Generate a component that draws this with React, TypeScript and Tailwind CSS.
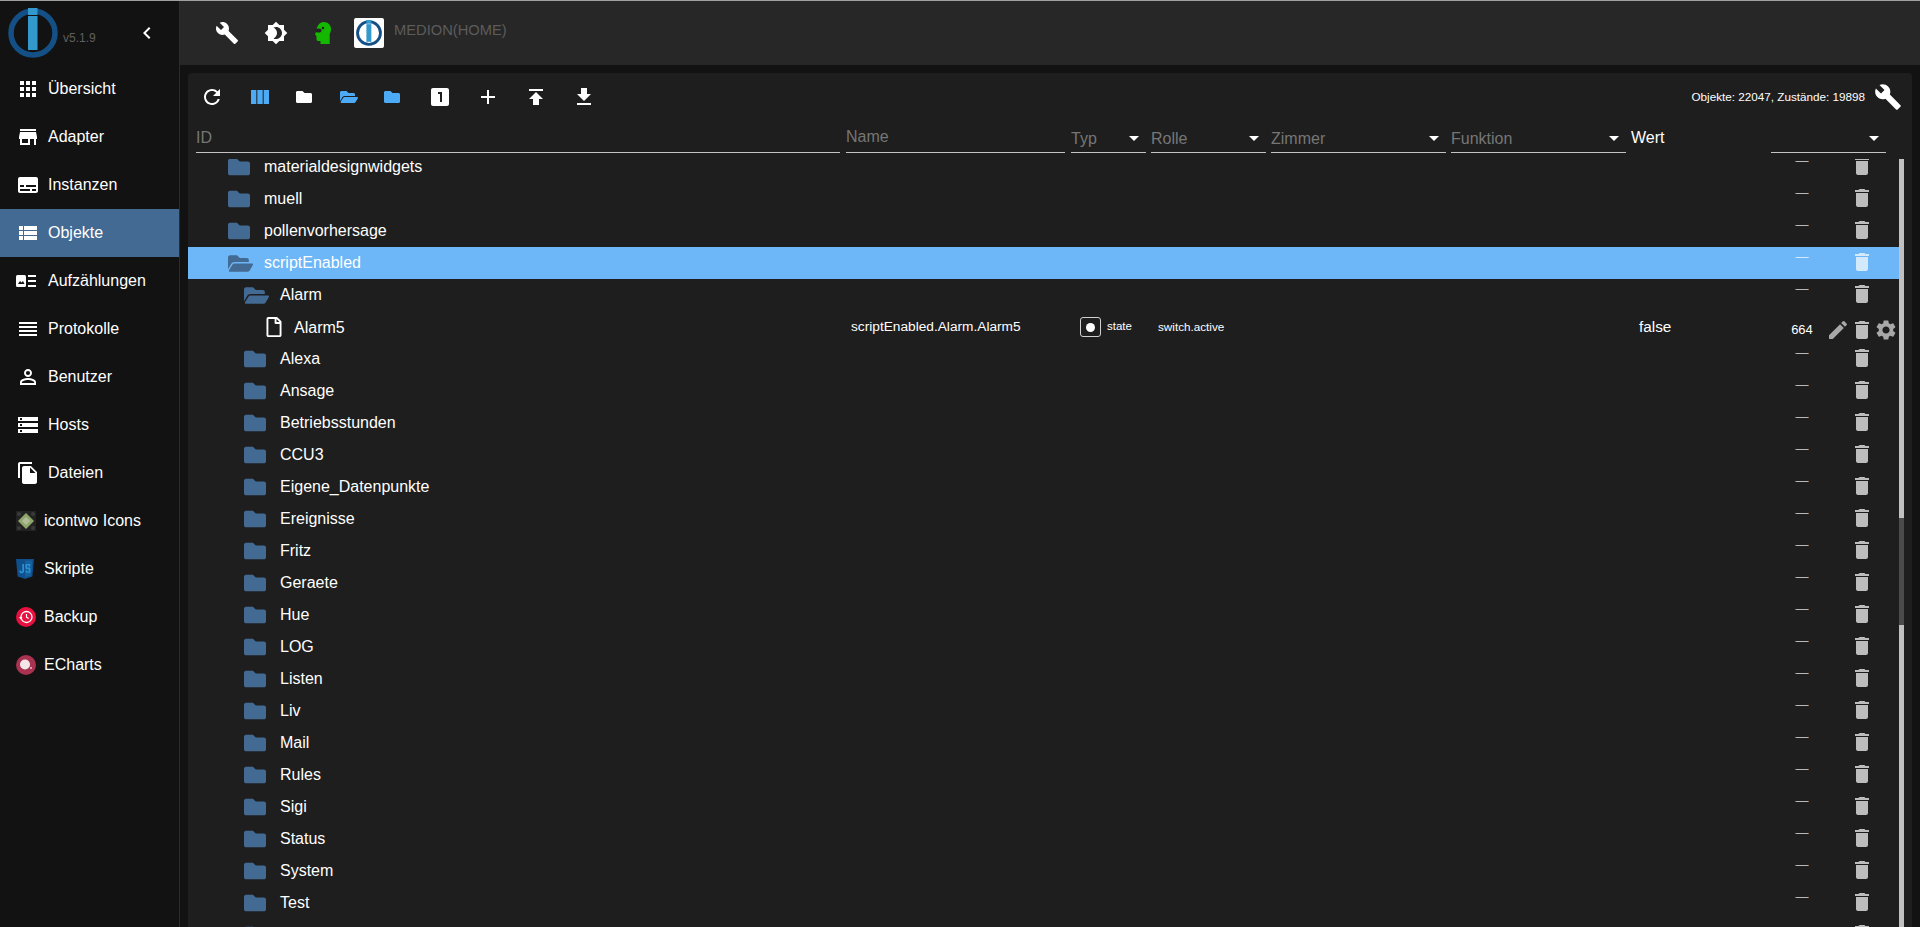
import type { ReactNode } from "react"
import { FaFolder, FaFolderOpen, FaRegFile } from "react-icons/fa"
import {
  MdAdd,
  MdApps,
  MdBrightness4,
  MdBuild,
  MdChevronLeft,
  MdDelete,
  MdEdit,
  MdFileCopy,
  MdGetApp,
  MdLooksOne,
  MdPersonOutline,
  MdPublish,
  MdRefresh,
  MdReorder,
  MdSettings,
  MdStorage,
  MdStore,
  MdSubtitles,
  MdViewColumn,
  MdViewList,
} from "react-icons/md"

function IoLogo({ size }: { size: number }) {
  return (
    <svg width={size} height={size} viewBox="0 0 50 50">
      <circle cx="25" cy="25" r="22" fill="none" stroke="#144f86" strokeWidth="5.500" />
      <rect x="20" y="0" width="9.500" height="7" fill="#3399cc" />
      <rect x="20" y="8" width="9.500" height="34" fill="#3399cc" />
    </svg>
  )
}

function EnumIcon() {
  return (
    <svg width="20" height="12" viewBox="0 0 20 12" fill="#fff">
      <rect x="0" y="0" width="10" height="12" rx="1.500" />
      <path d="M2 9l2-3 1.500 1.500L7 6l1.500 3z" fill="#121212" />
      <rect x="12" y="0" width="8" height="2" />
      <rect x="12" y="5" width="8" height="2" />
      <rect x="12" y="10" width="8" height="2" />
    </svg>
  )
}

function IconTwo() {
  return (
    <svg width="20" height="20" viewBox="0 0 20 20">
      <rect width="20" height="20" fill="#222" />
      <circle cx="3" cy="3" r="2" fill="#3a3a3a" />
      <circle cx="17" cy="3" r="2" fill="#3a3a3a" />
      <circle cx="3" cy="17" r="2" fill="#3a3a3a" />
      <circle cx="17" cy="17" r="2" fill="#3a3a3a" />
      <path d="M10 2l8 8-8 8-8-8z" fill="#8fa66b" />
      <path d="M10 6l4 4-4 4-4-4z" fill="#b3bc9a" />
    </svg>
  )
}

function JsIcon() {
  return (
    <svg width="18" height="20" viewBox="0 0 18 20">
      <path d="M0 0h18l-1.600 17.500L9 20l-7.400-2.500z" fill="#0f4f8c" />
      <path d="M9 1.500h7.300L15 16.500 9 18.500z" fill="#15609f" />
      <path d="M8 5v8l-1.200 1.200H4.400L3.400 13v-1.600h1.600v1.200h1.300V5z" fill="#2d8fd0" />
      <path d="M14.400 5H10.200L9.400 5.800v3.400l.8.800h2.600v2.600h-1.600v-1.200H9.600v1.600l.8.800h3.200l.8-.8V9.200l-.8-.8h-2.600V6.600h1.600v1h1.600z" fill="#2d8fd0" />
    </svg>
  )
}

function BackupIcon() {
  return (
    <svg width="20" height="20" viewBox="0 0 20 20">
      <circle cx="10" cy="10" r="10" fill="#e8103f" />
      <circle cx="10.500" cy="10" r="5.500" fill="none" stroke="#fff" strokeWidth="1.300" />
      <path d="M10.500 7v3.200l2.200 1.300" fill="none" stroke="#fff" strokeWidth="1.200" />
      <path d="M3 10h3.500L4.800 12.500z" fill="#fff" />
    </svg>
  )
}

function EchartsIcon() {
  return (
    <svg width="20" height="20" viewBox="0 0 20 20">
      <circle cx="10" cy="10" r="10" fill="#a8324f" />
      <circle cx="9" cy="9.500" r="5" fill="#f3e6e9" />
      <circle cx="15" cy="13" r="1" fill="#e8c6ce" />
    </svg>
  )
}

function HeadIcon() {
  return (
    <svg width="16" height="22" viewBox="0 0 16 22">
      <path
        d="M8.500 0c4.300 0 7.500 2.800 7.500 7 0 2-.6 3.500-1.300 5v10H5.500v-3H2.500L1.500 17.500V14L0 12.500l1.300-3C1.800 4 4.500 0 8.500 0z"
        fill="#15b800"
      />
      <ellipse cx="3.500" cy="8.500" rx="3" ry="2" fill="#222" />
      <circle cx="8" cy="6" r="1.200" fill="#222" />
    </svg>
  )
}

function StateIcon() {
  return (
    <span className="flex h-[20px] w-[21px] items-center justify-center rounded-[3px] border border-[#d0d0d0]">
      <span className="h-[9px] w-[9px] rounded-full bg-white" />
    </span>
  )
}

function Caret() {
  return <span className="mr-[7px] mt-[3px] h-0 w-0 border-x-[5px] border-t-[5px] border-x-transparent border-t-white" />
}

const navItems: { label: string; icon: ReactNode; active?: boolean; plugin?: boolean }[] = [
  { label: "Übersicht", icon: <MdApps size={24} /> },
  { label: "Adapter", icon: <MdStore size={24} /> },
  { label: "Instanzen", icon: <MdSubtitles size={24} /> },
  { label: "Objekte", icon: <MdViewList size={24} />, active: true },
  { label: "Aufzählungen", icon: <EnumIcon /> },
  { label: "Protokolle", icon: <MdReorder size={24} /> },
  { label: "Benutzer", icon: <MdPersonOutline size={24} /> },
  { label: "Hosts", icon: <MdStorage size={24} /> },
  { label: "Dateien", icon: <MdFileCopy size={24} /> },
  { label: "icontwo Icons", icon: <IconTwo />, plugin: true },
  { label: "Skripte", icon: <JsIcon />, plugin: true },
  { label: "Backup", icon: <BackupIcon />, plugin: true },
  { label: "ECharts", icon: <EchartsIcon />, plugin: true },
]

type Row = { name: string; level: 1 | 2 | 3; open?: boolean; selected?: boolean; state?: boolean }

const rows: Row[] = [
  { name: "materialdesignwidgets", level: 1 },
  { name: "muell", level: 1 },
  { name: "pollenvorhersage", level: 1 },
  { name: "scriptEnabled", level: 1, open: true, selected: true },
  { name: "Alarm", level: 2, open: true },
  { name: "Alarm5", level: 3, state: true },
  { name: "Alexa", level: 2 },
  { name: "Ansage", level: 2 },
  { name: "Betriebsstunden", level: 2 },
  { name: "CCU3", level: 2 },
  { name: "Eigene_Datenpunkte", level: 2 },
  { name: "Ereignisse", level: 2 },
  { name: "Fritz", level: 2 },
  { name: "Geraete", level: 2 },
  { name: "Hue", level: 2 },
  { name: "LOG", level: 2 },
  { name: "Listen", level: 2 },
  { name: "Liv", level: 2 },
  { name: "Mail", level: 2 },
  { name: "Rules", level: 2 },
  { name: "Sigi", level: 2 },
  { name: "Status", level: 2 },
  { name: "System", level: 2 },
  { name: "Test", level: 2 },
  { name: "", level: 2 },
]

const levelPad = { 1: "pl-[40px]", 2: "pl-[56px]", 3: "pl-[76px]" }
const levelIcon = { 1: "w-[36px]", 2: "w-[36px]", 3: "w-[30px]" }

function TreeRow({ row }: { row: Row }) {
  const trash = row.selected ? "text-[#d3e9fc]" : "text-[#bdbdbd]"
  // action icons sit a little off the row centre in the original
  const offset = row.state ? "mt-[6px]" : "mb-[2px]"
  return (
    <div
      className={`grid h-[32px] grid-cols-[658px_225px_80px_120px_180px_180px_140px_55px_24px_24px_24px] items-center text-white ${
        row.selected ? "bg-[#6db6f7]" : ""
      }`}
    >
      <div className={`flex items-center text-[16px] ${levelPad[row.level]}`}>
        <span className={`flex items-center ${levelIcon[row.level]}`}>
          {row.state ? (
            <FaRegFile size={20} className="text-white" />
          ) : row.open ? (
            <FaFolderOpen size={25} className="text-[#436a93]" />
          ) : (
            <FaFolder size={22} className="text-[#436a93]" />
          )}
        </span>
        <span className={row.state ? "mt-[1px]" : ""}>{row.name}</span>
      </div>
      <div className="pl-[5px] text-[13.700px]">{row.state && "scriptEnabled.Alarm.Alarm5"}</div>
      <div className="flex items-center gap-[6px] pl-[9px] text-[11.500px]">
        {row.state && (
          <>
            <StateIcon />
            state
          </>
        )}
      </div>
      <div className="pl-[7px] text-[11.700px]">{row.state && "switch.active"}</div>
      <div />
      <div />
      <div className="pl-[8px] text-[15.300px]">{row.state && "false"}</div>
      {row.state ? (
        <div className="mt-[6px] pl-[7px] text-center text-[13px] text-white">664</div>
      ) : (
        <div className={`mb-[12px] pl-[7px] text-center text-[13px] ${row.selected ? "text-[#d3e9fc]" : "text-[#b8b8b8]"}`}>
          {row.name && "—"}
        </div>
      )}
      <div className={`flex justify-center text-[#a8a8a8] ${offset}`}>{row.state && <MdEdit size={24} />}</div>
      <div className={`flex justify-center ${trash} ${offset}`}>
        <MdDelete size={24} />
      </div>
      <div className={`flex justify-center text-[#a8a8a8] ${offset}`}>{row.state && <MdSettings size={24} />}</div>
    </div>
  )
}

function Filter({ label, width, labelClass, select }: { label: string; width: string; labelClass: string; select?: boolean }) {
  return (
    <div className={`flex h-[32px] items-center justify-between border-b border-[#c4c4c4] text-[16px] text-[#767676] ${width}`}>
      <span className={labelClass}>{label}</span>
      {select && <Caret />}
    </div>
  )
}

export default function App() {
  return (
    <div className="flex h-screen overflow-hidden border-t border-[#a0a0a0] bg-[#121212] font-['Liberation_Sans',Arial,sans-serif] text-white">
      {/* Sidebar */}
      <aside className="w-[180px] shrink-0 border-r border-[#2c2c2c] bg-[#121212]">
        <div className="flex h-[64px] items-start pl-[8px] pt-[7px]">
          <IoLogo size={50} />
          <span className="ml-[5px] mt-[21px] text-[12px] text-[#5f5f5f]">v5.1.9</span>
          <MdChevronLeft size={24} className="ml-[39px] mt-[13px]" />
        </div>
        {navItems.map((item) => (
          <div
            key={item.label}
            className={`flex h-[48px] items-center pl-[16px] text-[16px] ${item.active ? "bg-[#436a93]" : ""}`}
          >
            <span className={`flex items-center justify-start ${item.plugin ? "w-[28px]" : "w-[32px]"}`}>
              {item.icon}
            </span>
            {item.label}
          </div>
        ))}
      </aside>

      <div className="flex min-w-0 flex-1 flex-col">
        {/* Top bar */}
        <header className="flex h-[64px] shrink-0 items-center bg-[#272727] pl-[35px]">
          <MdBuild size={24} />
          <MdBrightness4 size={24} className="ml-[25px]" />
          <span className="ml-[27px]">
            <HeadIcon />
          </span>
          <span className="ml-[23px] flex h-[30px] w-[30px] items-center justify-center rounded-[2px] bg-white">
            <IoLogo size={26} />
          </span>
          <span className="mb-[6px] ml-[10px] text-[14.700px] text-[#5c5c5c]">MEDION(HOME)</span>
        </header>

        {/* Object browser */}
        <main className="mx-[8px] mt-[8px] flex min-h-0 flex-1 flex-col overflow-hidden rounded-t-[4px] bg-[#1e1e1e]">
          <div className="flex h-[48px] shrink-0 items-center pl-[12px]">
            <MdRefresh size={24} />
            <MdViewColumn size={24} className="ml-[24px] text-[#4dabf5]" />
            <span className="ml-[20px] flex w-[24px] justify-center">
              <FaFolder size={16} />
            </span>
            <span className="ml-[21px] flex w-[24px] justify-center text-[#4dabf5]">
              <FaFolderOpen size={18} />
            </span>
            <span className="ml-[19px] flex w-[24px] justify-center text-[#4dabf5]">
              <FaFolder size={16} />
            </span>
            <MdLooksOne size={24} className="ml-[24px]" />
            <MdAdd size={24} className="ml-[24px]" />
            <MdPublish size={24} className="ml-[24px]" />
            <MdGetApp size={24} className="ml-[24px]" />
            <span className="ml-auto text-[11.700px]">Objekte: 22047, Zustände: 19898</span>
            <MdBuild size={28} className="ml-[9px] mr-[10px]" />
          </div>

          <div className="flex h-[32px] shrink-0 items-end pl-[8px]">
            <Filter label="ID" width="w-[644px]" labelClass="mt-[2px]" />
            <div className="w-[6px]" />
            <Filter label="Name" width="w-[219px]" labelClass="mt-[1px]" />
            <div className="w-[6px]" />
            <Filter label="Typ" width="w-[75px]" labelClass="mt-[4px]" select />
            <div className="w-[5px]" />
            <Filter label="Rolle" width="w-[115px]" labelClass="mt-[4px]" select />
            <div className="w-[5px]" />
            <Filter label="Zimmer" width="w-[175px]" labelClass="mt-[4px]" select />
            <div className="w-[5px]" />
            <Filter label="Funktion" width="w-[175px]" labelClass="mt-[4px]" select />
            <div className="w-[5px]" />
            <span className="mb-[3px] w-[140px] text-[16px]">Wert</span>
            <div className="flex h-[32px] w-[115px] items-center justify-end border-b border-[#c4c4c4]">
              <Caret />
            </div>
          </div>

          <div className="mt-[6px] flex min-h-0 flex-1 pr-[8px]">
            <div className="min-w-0 flex-1 overflow-hidden">
              <div className="-mt-[8px]">
                {rows.map((row, idx) => (
                  <TreeRow key={idx} row={row} />
                ))}
              </div>
            </div>
            <div className="w-[5px] shrink-0 bg-[#c1c1c1]">
              <div className="mt-[359px] h-[107px] bg-[#4b4b4b]" />
            </div>
          </div>
        </main>
      </div>
    </div>
  )
}
